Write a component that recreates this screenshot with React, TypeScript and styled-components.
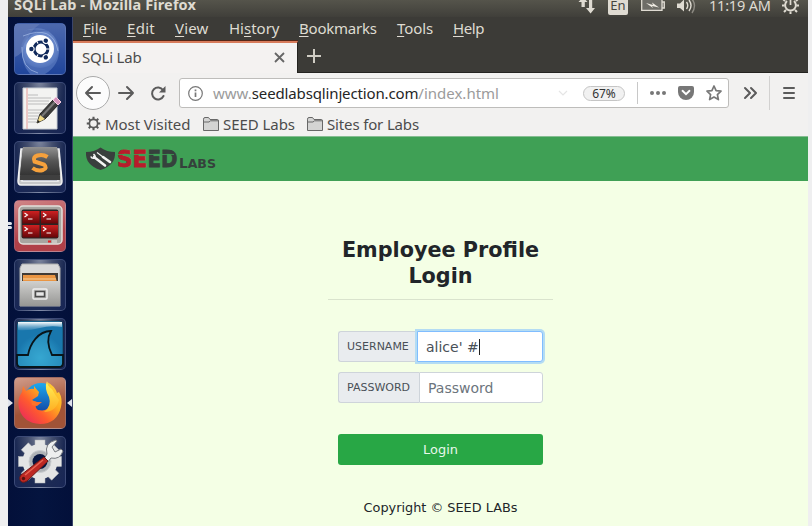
import React from 'react';
import styled, { createGlobalStyle, css } from 'styled-components';

const Global = createGlobalStyle`
  *, *::before, *::after { box-sizing: border-box; }
  body { margin: 0; background: #efeff0; overflow: hidden; }
  svg { display: block; flex: none; overflow: visible; }
`;

const Desktop = styled.div`
  width: 800px;
  height: 526px;
  margin-left: 8px;
  display: grid;
  grid-template: 17px 509px / 65px 735px;
  font: 15px/20px "Noto Sans", "Open Sans", sans-serif;
  color: #4c4c4c;
  white-space: nowrap;
`;

const TopPanel = styled.header`
  grid-column: 1 / -1;
  display: flex;
  align-items: flex-start;
  overflow: hidden;
  background: linear-gradient(#55544b, #403f3a);
  color: #dfdbd2;
`;

const WindowTitle = styled.h1`
  margin: -6px 0 0 6px;
  width: 565px;
  font-size: 14.5px;
  line-height: 20px;
  font-weight: 700;
  letter-spacing: 0.12px;
`;

const Indicators = styled.div`
  display: flex;
  height: 17px;
`;

const Clock = styled.time`
  width: 73px;
  margin: -5px 0 0 13px;
  font-size: 14.5px;
  letter-spacing: -0.2px;
`;

const Language = styled.span`
  width: 20px;
  height: 19px;
  margin: -4px 13px 0 13px;
  border-radius: 2px;
  background: #dfdbd2;
  color: #45443f;
  text-align: center;
  font-size: 13px;
  line-height: 19px;
`;

const Launcher = styled.nav`
  position: relative;
  display: flex;
  flex-direction: column;
  gap: 7px;
  padding: 6px 0 0 6px;
  background: linear-gradient(90deg, #03103a, #04143f 50%, #03103a);
  border-right: 1px solid #3a456b;
`;

const Tile = styled.button<{ $tone: string }>`
  width: 52px;
  height: 52px;
  padding: 0;
  border: 1px solid rgba(150, 165, 205, 0.28);
  border-radius: 5px;
  background: ${({ $tone }) => $tone};
  svg { margin: -1px; }
`;

const Marker = styled.i<{ $top: number; $side: 'left' | 'right' }>`
  position: absolute;
  top: ${({ $top }) => $top}px;
  border: 4px solid transparent;
  ${({ $side }) => $side === 'left'
    ? css`left: 0; border-left: 5px solid #dfe3ec; border-right: 0;`
    : css`right: 0; border-right: 5px solid #dfe3ec; border-left: 0;`}
`;

const Dash = styled.i<{ $top: number }>`
  position: absolute;
  left: 0;
  top: ${({ $top }) => $top}px;
  width: 4px;
  height: 3px;
  border-radius: 0 2px 2px 0;
  background: #dfe3ec;
`;

const Browser = styled.main`
  display: flex;
  flex-direction: column;
  min-width: 0;
  background: #f2f1f0;
`;

const MenuBar = styled.nav`
  display: flex;
  gap: 20px;
  height: 24px;
  padding: 1px 0 0 10px;
  background: #3c3b37;
  color: #dfdbd2;
`;

const MenuItem = styled.span<{ $width: number; $spacing?: number }>`
  width: ${({ $width }) => $width}px;
  letter-spacing: ${({ $spacing = 0 }) => $spacing}px;
  u { text-decoration-thickness: 1px; text-underline-offset: 2px; }
`;

const TabStrip = styled.div`
  display: flex;
  height: 32px;
  background: #3c3b37;
  box-shadow: inset 0 -1px #242320;
`;

const Tab = styled.div`
  display: flex;
  justify-content: space-between;
  align-items: center;
  width: 225px;
  padding: 0 13px 2px 9px;
  border-top: 2px solid #d77b5b;
  border-right: 1px solid #24231f;
  background: #f4f2f1;
  letter-spacing: -0.2px;
  box-shadow: 0 -1px #552616;
`;

const NewTab = styled.button`
  display: grid;
  place-items: center;
  width: 32px;
  padding: 0 0 2px;
  border: 0;
  background: none;
`;

const NavBar = styled.div`
  display: flex;
  align-items: center;
  height: 40px;
  padding-left: 3px;
`;

const BackButton = styled.button`
  display: grid;
  place-items: center;
  width: 34px;
  height: 34px;
  padding: 0;
  border: 1px solid #aaa;
  border-radius: 50%;
  background: #fcfcfc;
`;

const NavButton = styled.button`
  display: grid;
  place-items: center;
  width: 32px;
  height: 32px;
  padding: 0;
  border: 0;
  background: none;
`;

const AddressBar = styled.div`
  display: flex;
  align-items: center;
  width: 550px;
  height: 30px;
  margin-left: 5px;
  padding-left: 8px;
  border: 1px solid #bebdbb;
  border-radius: 3px;
  background: #fff;
`;

const Url = styled.span`
  display: flex;
  width: 345px;
  margin-left: 10px;
  color: #9b9b9b;
`;

const Host = styled.b`
  font-weight: 400;
  color: #252525;
  letter-spacing: -0.14px;
`;

const Zoom = styled.span`
  width: 42px;
  height: 15px;
  margin: 0 12px 0 15px;
  border: 1px solid #c5c5c5;
  border-radius: 8px;
  background: #f1f1f1;
  color: #333;
  font-size: 12px;
  line-height: 13px;
  text-align: center;
`;

const AddressActions = styled.div`
  display: flex;
  align-items: center;
  gap: 12px;
  height: 22px;
  padding-left: 12px;
  border-left: 1px solid #c8c8c8;
`;

const ToolbarEnd = styled.div`
  display: flex;
  align-items: center;
  height: 34px;
  padding-left: 15px;
  gap: 12px;
`;

const MainMenu = styled.button`
  display: flex;
  align-items: center;
  height: 34px;
  padding: 0 0 0 13px;
  border: 0;
  border-left: 1px solid #d2d1d0;
  background: none;
`;

const BookmarksBar = styled.div`
  display: flex;
  align-items: center;
  height: 23px;
  padding: 0 0 2px 13px;
`;

const Bookmark = styled.span<{ $width: number; $spacing?: number }>`
  display: flex;
  align-items: center;
  gap: 4px;
  width: ${({ $width }) => $width}px;
  letter-spacing: ${({ $spacing = 0 }) => $spacing}px;
`;

const SiteHeader = styled.header`
  height: 45px;
  padding: 11px 0 0 13px;
  border-top: 1px solid #86bd92;
  background: #3fa055;
`;

const Page = styled.section`
  flex: 1;
  background: #f4ffe5;
  color: #212529;
  font-family: "DejaVu Sans", sans-serif;
`;

const LoginCard = styled.form`
  display: flex;
  flex-direction: column;
  align-items: center;
  width: 225px;
  margin: 56px 0 0 255px;
`;

const Heading = styled.h2`
  width: 225px;
  height: 63px;
  margin: 0 0 31px;
  border-bottom: 1px solid #d9e3cd;
  font-size: 20.75px;
  font-weight: 700;
  line-height: 26px;
  text-align: center;
  white-space: normal;
`;

const Field = styled.label`
  display: flex;
  width: 205px;
  height: 31px;
  margin-bottom: 10px;
`;

const FieldName = styled.span<{ $width: number }>`
  width: ${({ $width }) => $width}px;
  padding-left: 8px;
  border: 1px solid #ced4da;
  border-right: 0;
  border-radius: 3px 0 0 3px;
  background: #e9ecef;
  color: #495057;
  font-size: 11px;
  line-height: 29px;
`;

const FieldBox = styled.span<{ $focused?: boolean }>`
  display: flex;
  align-items: center;
  flex: 1;
  padding-left: 8px;
  border: 1px solid ${({ $focused }) => ($focused ? '#80bdff' : '#ced4da')};
  border-radius: 0 3px 3px 0;
  background: #fff;
  color: ${({ $focused }) => ($focused ? '#495057' : '#6c757d')};
  font-size: 14px;
  ${({ $focused }) => $focused && css`box-shadow: 0 0 0 2px #b4dcf3;`}
`;

const Caret = styled.i`
  width: 1px;
  height: 16px;
  background: #222;
`;

const LoginButton = styled.button`
  width: 205px;
  height: 31px;
  margin: 21px 0 33px;
  padding: 0;
  border: 0;
  border-radius: 3px;
  background: #28a745;
  color: #e9f8ec;
  font: 12.9px/31px "DejaVu Sans", sans-serif;
`;

const Copyright = styled.p`
  margin: 0;
  font-size: 12.85px;
  line-height: 20px;
`;

const stroke = { fill: 'none', stroke: '#5b5b5b', strokeWidth: 2, strokeLinecap: 'round', strokeLinejoin: 'round' } as const;

const Gear = ({ size, color }: { size: number; color: string }) => (
  <svg width={size} height={size} viewBox="0 0 16 16" fill="none" stroke={color}>
    <circle cx="8" cy="8" r="4.4" strokeWidth="1.8" />
    {[0, 45, 90, 135, 180, 225, 270, 315].map((a) => (
      <path key={a} d="M8 3.4V.8" strokeWidth="2.2" transform={`rotate(${a} 8 8)`} />
    ))}
  </svg>
);

const Folder = () => (
  <svg width="16" height="14" viewBox="0 0 16 14" fill="#d4d4d3" stroke="#686868">
    <path d="M.5 13.5V2.2Q.5.5 2 .5H5.5L7 2.5H14.5Q15.5 2.5 15.5 4V13.5Z" />
    <path d="M.5 5H6L7.5 3.8H15" fill="none" />
  </svg>
);

const SystemIndicators = () => (
  <Indicators>
    <svg width="16" height="17" fill="#dfdbd2">
      <path d="M2.5 7V2H-.5L4-3 8.5 2H5.8V7ZM10-2H13.2V8H16L11.6 13.5 7 8H10Z" />
    </svg>
    <Language>En</Language>
    <svg width="24" height="17">
      <path d="M.7-1H21V10.3H.7ZM21 2H23.3V8H21" fill="#6e6d67" stroke="#dfdbd2" strokeWidth="1.3" />
      <path d="M5 3 12 5 11 2.5 18 7.5 11 6 12 8Z" fill="#f0ece4" />
    </svg>
    <svg width="31" height="17" fill="none" stroke="#dfdbd2" strokeWidth="1.4">
      <path d="M12 3.5H15L19-.5V11.5L15 8H12Z" fill="#dfdbd2" stroke="none" />
      <path d="M21.5 2Q24 5.5 21.5 9M24 0Q28 5.5 24 11" />
      <path d="M27-1Q32 5.5 27 13" opacity=".45" />
    </svg>
    <Clock>11:19 AM</Clock>
    <svg width="17" height="17" fill="none" stroke="#dfdbd2">
      <path d="M5 1A5.4 5.4 0 1 0 12 1" strokeWidth="2" />
      <path d="M8.5-2V5" strokeWidth="1.7" />
      <path d="M3 1 1-1M2.5 5.5H0M4 10 2 12M8.5 11.5V14M13 10 15 12M14.5 5.5H17M14 1 16-1" strokeWidth="2" />
    </svg>
  </Indicators>
);

const DashIcon = () => (
  <svg width="52" height="52">
    <defs>
      <radialGradient id="glow"><stop offset=".6" stopColor="#7e9ddb" stopOpacity=".6" /><stop offset="1" stopColor="#7e9ddb" stopOpacity=".15" /></radialGradient>
    </defs>
    <path d="M1 1H26Q14 9 13 20 10 30 1 34Z" fill="#6e83bb" opacity=".55" />
    <path d="M9 8Q38-2 45 25 46 42 31 51H16Q6 40 9 24 14 8 35 8Q17 5 9 8Z" fill="#809dd9" opacity=".4" />
    <circle cx="26" cy="26" r="19" fill="url(#glow)" />
    <path d="M9 13Q39 1 44 28M8 24Q7 46 24 50" fill="none" stroke="#abc0e9" opacity=".65" />
    <circle cx="26" cy="26" r="14" fill="#fff" />
    <circle cx="27" cy="26" r="6.9" fill="none" stroke="#10295b" strokeWidth="3" />
    {[60, 180, 300].map((a) => (
      <g key={a} transform={`rotate(${a} 27 26)`}>
        <circle cx="36.4" cy="26" r="3.1" fill="#fff" />
        <circle cx="36.6" cy="26" r="2.2" fill="#10295b" />
      </g>
    ))}
    <path d="M32 26H37M24 20.5 21.5 16M24 31.5 21.5 36" stroke="#fff" strokeWidth="1.2" />
  </svg>
);

const EditorIcon = () => (
  <svg width="52" height="52">
    <path d="M9 6H43V47H9Z" fill="#f3f3f1" stroke="#c9ced4" />
    <path d="M13 6V47" stroke="#e59c99" />
    <path d="M14 13H24M14 16H37M14 19H35M14 22H36M14 28H37M14 31H33M14 34H35M14 37H26M14 40H25" stroke="#bbb" />
    <path d="M23 41 26 32 39 18 44 23 31 37Z" fill="#3c3c3b" stroke="#232323" />
    <path d="M28 34 41 20" stroke="#777" strokeWidth="2" />
    <path d="M23 41 26 33 31 37Z" fill="#f0d985" />
    <path d="M23 41 24 38 26 40Z" fill="#222" />
    <path d="M39 18 42 15 47 20 44 23Z" fill="#d494bc" stroke="#f1c8de" />
  </svg>
);

const SublimeIcon = () => (
  <svg width="52" height="52">
    <defs><linearGradient id="key" y2="1" x2="0"><stop stopColor="#929292" /><stop offset=".5" stopColor="#555" /><stop offset="1" stopColor="#343434" /></linearGradient></defs>
    <path d="M7 8H9L8 40H44L43 8H45L48 40Q48 44 45 44H7Q4 44 4 40Z" fill="#c7c8c9" stroke="#f2f2f2" strokeWidth="1.5" />
    <path d="M9 6H43L46 35V39H6V35Z" fill="#3f3f3f" />
    <path d="M9 6H43L46 34H6Z" fill="url(#key)" />
    <path d="M33.5 16Q29 13 23.5 14.5 18.5 16 20.5 20.5L30 23.5Q34 27 29 29 23 30.5 18.5 27" fill="none" stroke="#f6a13c" strokeWidth="4" />
  </svg>
);

const TerminatorIcon = () => (
  <svg width="52" height="52">
    <defs><linearGradient id="screen" y2="1" x2="0"><stop stopColor="#ce2021" /><stop offset="1" stopColor="#650609" /></linearGradient></defs>
    <rect x="5" y="6" width="43" height="38" rx="4" fill="#a8a5a0" stroke="#e2dfda" strokeWidth="1.5" />
    <rect x="7.5" y="9.5" width="37" height="29" rx="2" fill="#292424" />
    {[8.5, 27].map((x) => [11, 25].map((y) => (
      <g key={`${x}-${y}`} transform={`translate(${x} ${y})`}>
        <rect width="17" height="12.5" fill="url(#screen)" />
        <path d="M2 2 5 4 2 6M5.5 8H10" fill="none" stroke="#fff" strokeWidth="1.1" />
      </g>
    )))}
    <path d="M34 41.5H37" stroke="#e91e22" strokeWidth="2" />
    <rect x="38" y="40" width="5" height="3" fill="#c8c6c1" />
  </svg>
);

const FilesIcon = () => (
  <svg width="52" height="52">
    <defs><linearGradient id="drawer" y2="1" x2="0"><stop stopColor="#d0d0ce" /><stop offset="1" stopColor="#969694" /></linearGradient></defs>
    <path d="M6 9 8 5H44L46 9V47H6Z" fill="#d9dad9" stroke="#adaead" />
    <rect x="8" y="14" width="36" height="10" fill="#413b35" />
    <path d="M9 16H41L43 23H9Z" fill="#e99543" />
    <path d="M9 20H42" stroke="#f8d29c" />
    <path d="M6 22H46V47H6Z" fill="url(#drawer)" />
    <rect x="19" y="30" width="14" height="10" rx="1" fill="none" stroke="#eee" strokeWidth="1.5" />
    <rect x="21.5" y="32.5" width="9" height="5" fill="#e7e7e7" stroke="#4b4b4b" strokeWidth="1.5" />
  </svg>
);

const WiresharkIcon = () => (
  <svg width="52" height="52">
    <defs>
      <radialGradient id="sea" cy=".8"><stop stopColor="#36acd8" /><stop offset="1" stopColor="#1977ad" /></radialGradient>
      <linearGradient id="shine" y2="1" x2="0"><stop stopColor="#fff" /><stop offset="1" stopColor="#8bbbd7" stopOpacity=".2" /></linearGradient>
    </defs>
    <rect x="3" y="3" width="46" height="46" rx="4" fill="url(#sea)" stroke="#0d202a" strokeOpacity=".5" />
    <path d="M4 4H48V9Q36 7 26 10 14 13 4 12Z" fill="url(#shine)" />
    <path d="M3 37H14C16 26 24 13 37 13Q31 23 38 37H49V45Q49 49 45 49H7Q3 49 3 45Z" fill="#36a2ca" fillOpacity=".5" stroke="#08151a" strokeWidth="1.8" />
  </svg>
);

const FirefoxIcon = () => (
  <svg width="52" height="52">
    <defs>
      <linearGradient id="fox" x1="1" x2="0" y2="1"><stop stopColor="#ffdf42" /><stop offset=".35" stopColor="#ffad1f" /><stop offset=".62" stopColor="#ff5b2e" /><stop offset="1" stopColor="#e51b68" /></linearGradient>
      <linearGradient id="globe" x2="0" y2="1"><stop stopColor="#1ca9ef" /><stop offset="1" stopColor="#133797" /></linearGradient>
      <linearGradient id="tail" x2="0" y2="1"><stop stopColor="#fff458" /><stop offset="1" stopColor="#ffad22" /></linearGradient>
    </defs>
    <circle cx="27" cy="23" r="17" fill="url(#globe)" />
    <path d="M9 9 12 14Q16 11 20 12L20 9Q22 12 25 15L24 19 18 23Q20 25 23 25 20 30 24 33 34 35 36 28 38 16 33 5Q41 9 43 16L45 15Q49 22 47 30 43 47 26 47 9 46 5 31 3 22 8 15Z" fill="url(#fox)" />
    <path d="M33 4Q30 11 35 20 38 29 30 35 42 35 45 23 41 18 38 12 34 10 33 4Z" fill="url(#tail)" />
    <path d="M17 23 23 25 28 25 23 29 18 28Z" fill="#ff722a" />
  </svg>
);

const SettingsIcon = () => (
  <svg width="52" height="52">
    <g fill="#e4e5e5" stroke="#b2b6bb" strokeWidth=".5">
      {[0, 45, 90, 135].map((a) => <rect key={a} x="21" y="4" width="10" height="43" transform={`rotate(${a} 26 25.5)`} />)}
    </g>
    <circle cx="26" cy="25.5" r="17.5" fill="#e4e5e5" />
    <circle cx="26" cy="25.5" r="11" fill="#aeb2b6" stroke="#c9cccf" />
    <circle cx="26" cy="25.5" r="7.5" fill="#071640" />
    <path d="M30 23 33 18Q30 7 42 4L43 5 38 11 41 16 47 13 49 15Q46 24 37 22L33 27Z" fill="#eeefef" stroke="#777b80" />
    <path d="M30 21 34 25 13 45Q8 48 6 44 5 41 7 39Z" fill="#bd2823" stroke="#711916" />
    <path d="M11 39 29 24" stroke="#e86553" strokeWidth="1.5" />
    <circle cx="9.5" cy="42.5" r="1.7" fill="#571110" />
  </svg>
);

const glass = 'radial-gradient(ellipse at 50% -5%, #7e879f 0, #434e6e 35%, #1c2a54 68%, #182656)';

const launcherItems = [
  { name: 'Dash', tone: 'linear-gradient(#4c68ae, #20459b)', Icon: DashIcon },
  { name: 'Text Editor', tone: glass, Icon: EditorIcon },
  { name: 'Sublime Text', tone: glass, Icon: SublimeIcon },
  { name: 'Terminator', tone: 'linear-gradient(165deg, #d18688, #b04048 65%)', Icon: TerminatorIcon },
  { name: 'Files', tone: glass, Icon: FilesIcon },
  { name: 'Wireshark', tone: glass, Icon: WiresharkIcon },
  { name: 'Firefox', tone: 'linear-gradient(165deg, #d19c8a, #a15337 60%)', Icon: FirefoxIcon },
  { name: 'System Settings', tone: glass, Icon: SettingsIcon },
];

const menus = [
  { label: 'File', width: 24 },
  { label: 'Edit', width: 28, spacing: 0.3 },
  { label: 'View', width: 34, spacing: 0.15 },
  { label: 'History', width: 50, key: 2 },
  { label: 'Bookmarks', width: 78, spacing: -0.22 },
  { label: 'Tools', width: 36, spacing: -0.1 },
  { label: 'Help', width: 32, spacing: -0.4 },
];

const SeedLogo = () => (
  <svg width="132" height="24" fontFamily="DejaVu Sans" fontWeight="700" aria-label="SEED Labs">
    <path d="M0 4Q8 4 14.5-.5 21 4 29 4 30 17 14.5 22-1 17 0 4Z" fill="#393f3d" />
    <path d="M8 9 19 17.5" stroke="#f5f5f4" strokeWidth="2.6" strokeLinecap="round" />
    <path d="M11 4.5 17 9" stroke="#f5f5f4" strokeWidth="1.2" />
    <path d="M17 9 24 14" stroke="#f5f5f4" strokeWidth="2.6" strokeLinecap="round" />
    <path d="M4.8 8.5Q6 11 8.5 10 10 8 7.5 6" fill="none" stroke="#f5f5f4" strokeWidth="1.6" />
    <g fontSize="23.5" strokeWidth=".8">
      <text x="31" y="19.2" textLength="30" lengthAdjust="spacingAndGlyphs" fill="#b81c2b" stroke="#b81c2b">SE</text>
      <text x="61.5" y="19.2" textLength="30" lengthAdjust="spacingAndGlyphs" fill="#35413c" stroke="#35413c">ED</text>
    </g>
    <path d="M31 6.5H88" stroke="#3fa055" strokeWidth=".8" />
    <text x="93" y="19.5" fontSize="13.5" textLength="37" lengthAdjust="spacingAndGlyphs" fill="#35413c">
      L<tspan fontSize="12.5">ABS</tspan>
    </text>
  </svg>
);

export default function App() {
  return (
    <>
      <Global />
      <Desktop>
        <TopPanel>
          <WindowTitle>SQLi Lab - Mozilla Firefox</WindowTitle>
          <SystemIndicators />
        </TopPanel>
        <Launcher>
          {launcherItems.map(({ name, tone, Icon }) => (
            <Tile key={name} $tone={tone} aria-label={name}><Icon /></Tile>
          ))}
          <Dash $top={205} />
          <Dash $top={209} />
          <Marker $top={382} $side="left" />
          <Marker $top={382} $side="right" />
        </Launcher>
        <Browser>
          <MenuBar>
            {menus.map(({ label, width, spacing, key = 0 }) => (
              <MenuItem key={label} $width={width} $spacing={spacing}>
                {label.slice(0, key)}<u>{label[key]}</u>{label.slice(key + 1)}
              </MenuItem>
            ))}
          </MenuBar>
          <TabStrip>
            <Tab>
              SQLi Lab
              <svg width="9" height="9"><path d="M0 0 9 9M9 0 0 9" stroke="#666" strokeWidth="1.8" /></svg>
            </Tab>
            <NewTab aria-label="New tab">
              <svg width="14" height="14"><path d="M7 0V14M0 7H14" stroke="#cfccc3" strokeWidth="2" /></svg>
            </NewTab>
          </TabStrip>
          <NavBar>
            <BackButton aria-label="Back">
              <svg width="16" height="14"><path {...stroke} d="M15 7H1M7 1 1 7 7 13" /></svg>
            </BackButton>
            <NavButton aria-label="Forward">
              <svg width="16" height="14"><path {...stroke} d="M1 7H15M9 1 15 7 9 13" /></svg>
            </NavButton>
            <NavButton aria-label="Reload">
              <svg width="15" height="15"><path {...stroke} d="M12.5 10A6 6 0 1 1 12 4" /><path d="M14.5 0V6.5H8Z" fill="#5b5b5b" /></svg>
            </NavButton>
            <AddressBar>
              <svg width="15" height="15" fill="none" stroke="#777">
                <circle cx="7.5" cy="7.5" r="6.8" strokeWidth="1.2" />
                <path d="M7.5 6.5V11M7.5 3.5V5.2" strokeWidth="1.7" />
              </svg>
              <Url>www.<Host>seedlabsqlinjection.com</Host>/index.html</Url>
              <svg width="10" height="6"><path d="M1 1 5 5 9 1" fill="none" stroke="#e5e5e5" strokeWidth="1.2" /></svg>
              <Zoom>67%</Zoom>
              <AddressActions>
                <svg width="16" height="4" fill="#777"><circle cx="2" cy="2" r="2" /><circle cx="8" cy="2" r="2" /><circle cx="14" cy="2" r="2" /></svg>
                <svg width="16" height="14"><path d="M2 0H14Q16 0 16 2V6A8 8 0 0 1 0 6V2Q0 0 2 0Z" fill="#777" /><path d="M4.5 4.8 8 8.2 11.5 4.8" fill="none" stroke="#fff" strokeWidth="1.9" strokeLinecap="round" /></svg>
                <svg width="16" height="16"><path d="M8 1 10.1 5.6 15 6.2 11.4 9.6 12.4 14.6 8 12.1 3.6 14.6 4.6 9.6 1 6.2 5.9 5.6Z" fill="none" stroke="#777" strokeWidth="1.7" strokeLinejoin="round" /></svg>
              </AddressActions>
            </AddressBar>
            <ToolbarEnd>
              <svg width="13" height="12"><path {...stroke} d="M1 1 6 6 1 11M7 1 12 6 7 11" /></svg>
              <MainMenu aria-label="Menu">
                <svg width="12" height="12"><path {...stroke} d="M1 1H11M1 6H11M1 11H11" /></svg>
              </MainMenu>
            </ToolbarEnd>
          </NavBar>
          <BookmarksBar>
            <Bookmark $width={117} $spacing={-0.07}><Gear size={15} color="#595959" />Most Visited</Bookmark>
            <Bookmark $width={104} $spacing={-0.05}><Folder />SEED Labs</Bookmark>
            <Bookmark $width={112} $spacing={-0.15}><Folder />Sites for Labs</Bookmark>
          </BookmarksBar>
          <SiteHeader><SeedLogo /></SiteHeader>
          <Page>
            <LoginCard>
              <Heading>Employee Profile Login</Heading>
              <Field>
                <FieldName $width={79}>USERNAME</FieldName>
                <FieldBox $focused>alice' #<Caret /></FieldBox>
              </Field>
              <Field>
                <FieldName $width={81}>PASSWORD</FieldName>
                <FieldBox>Password</FieldBox>
              </Field>
              <LoginButton type="button">Login</LoginButton>
              <Copyright>Copyright © SEED LABs</Copyright>
            </LoginCard>
          </Page>
        </Browser>
      </Desktop>
    </>
  );
}
